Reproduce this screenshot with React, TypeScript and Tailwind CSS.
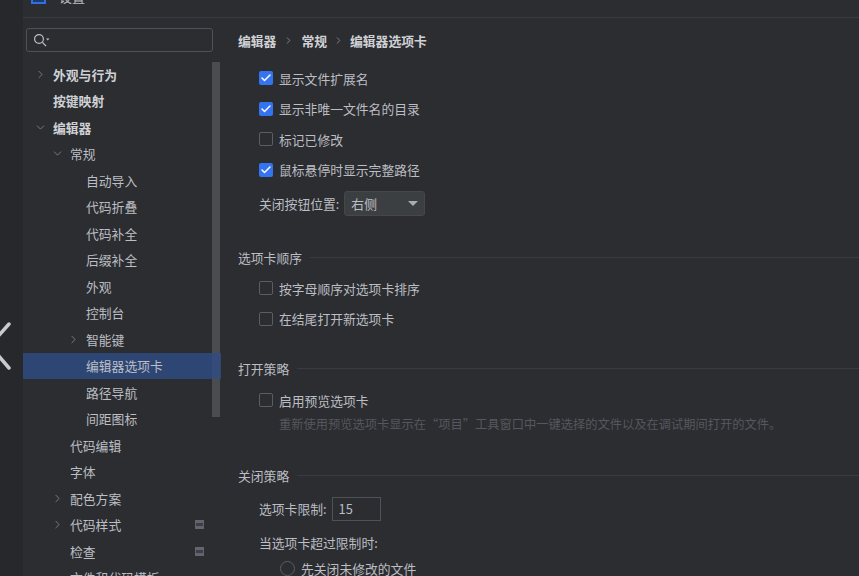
import { Check, ChevronDown, ChevronRight } from 'lucide-react'

const font = "[font-family:'Noto_Sans_CJK_SC','Liberation_Sans',sans-serif]"

const tree: { label: string; indent: number; arrow?: 'right' | 'down'; bold?: boolean; selected?: boolean; badge?: boolean }[] = [
  { label: '外观与行为', indent: 53, arrow: 'right', bold: true },
  { label: '按键映射', indent: 53, bold: true },
  { label: '编辑器', indent: 53, arrow: 'down', bold: true },
  { label: '常规', indent: 70, arrow: 'down' },
  { label: '自动导入', indent: 86 },
  { label: '代码折叠', indent: 86 },
  { label: '代码补全', indent: 86 },
  { label: '后缀补全', indent: 86 },
  { label: '外观', indent: 86 },
  { label: '控制台', indent: 86 },
  { label: '智能键', indent: 86, arrow: 'right' },
  { label: '编辑器选项卡', indent: 86, selected: true },
  { label: '路径导航', indent: 86 },
  { label: '间距图标', indent: 86 },
  { label: '代码编辑', indent: 70 },
  { label: '字体', indent: 70 },
  { label: '配色方案', indent: 70, arrow: 'right' },
  { label: '代码样式', indent: 70, arrow: 'right', badge: true },
  { label: '检查', indent: 70, badge: true },
  { label: '文件和代码模板', indent: 70 },
]

function TreeRow({ item }: { item: (typeof tree)[number] }) {
  return (
    <div
      className={`relative h-[26.5px] shrink-0 flex items-center text-[12.8px] ${item.selected ? 'bg-[#2f4c86]/80' : ''} ${item.bold ? 'font-bold text-[#cfd1d6]' : 'text-[#bcbec4]'}`}
      style={{ paddingLeft: item.indent - 23 }}
    >
      {item.arrow === 'right' && (
        <ChevronRight className="absolute w-[13px] h-[13px] text-[#9da0a8]" style={{ left: item.indent - 42 }} strokeWidth={1.2} />
      )}
      {item.arrow === 'down' && (
        <ChevronDown className="absolute w-[13px] h-[13px] text-[#9da0a8]" style={{ left: item.indent - 42 }} strokeWidth={1.2} />
      )}
      <span>{item.label}</span>
      {item.badge && (
        <span className="absolute left-[172px] w-[9px] h-[9px] bg-[#62656d] flex items-center justify-center">
          <span className="w-[7px] h-[3px] bg-[#3c3f45]" />
        </span>
      )}
    </div>
  )
}

function Checkbox({ label, checked }: { label: string; checked?: boolean }) {
  return (
    <div className="h-[30.5px] flex items-center gap-[6px] text-[12.8px] text-[#bcbec4]">
      <span className={`w-[14px] h-[14px] rounded-[2px] flex items-center justify-center ${checked ? 'bg-[#3574f0]' : 'border border-[#5a5d63]'}`}>
        {checked && <Check className="w-[12px] h-[12px] text-white" strokeWidth={3} />}
      </span>
      <span>{label}</span>
    </div>
  )
}

function Section({ title }: { title: string }) {
  return (
    <div className="flex items-center gap-[8px] text-[12.8px] text-[#bcbec4]">
      <span>{title}</span>
      <span className="flex-1 h-px bg-[#393b40]" />
    </div>
  )
}

export default function App() {
  return (
    <div className={`relative w-[859px] h-[576px] overflow-hidden bg-[#2b2d30] flex ${font}`}>
      <div className="w-[23px] shrink-0 bg-[#27282b]" />

      <div className="flex-1 min-w-0 flex flex-col">
        {/* title bar, cut off by the top of the picture */}
        <div className="h-[18px] shrink-0 flex items-end border-b border-[#393b40] pl-[8px] pb-[14px]">
          <span className="w-[15px] h-[15px] -mb-[1px] border-2 border-[#2f6fe0] bg-[#1d3a6e] shrink-0" />
          <span className="ml-[13px] text-[13px] leading-[13px] text-[#bcbec4]">设置</span>
        </div>

        <div className="flex-1 flex min-h-0">
          {/* left tree */}
          <div className="relative w-[198px] shrink-0">
            <div className="absolute left-[189px] top-[44px] w-[8px] h-[355px] bg-[#4a4c50]" />
            <div className="mx-[3px] mt-[10px] h-[24px] w-[187px] border border-[#4e5157] rounded-[3px] flex items-center pl-[6px] text-[#bcbec4]">
              <svg width="17" height="14" viewBox="0 0 17 14" fill="none" stroke="currentColor" strokeWidth="1.2">
                <circle cx="6" cy="6" r="4.4" />
                <path d="M9.4 9.4 L13 13" />
                <path d="M13 5.5 h3.5 l-1.75 2 z" fill="currentColor" stroke="none" />
              </svg>
            </div>
            <div className="relative mt-[9px] flex flex-col overflow-hidden h-[526px]">
              {tree.map((item) => (
                <TreeRow key={item.label} item={item} />
              ))}
            </div>
          </div>

          {/* settings page */}
          <div className="flex-1 min-w-0 pl-[17px] flex flex-col">
            <div className="mt-[13px] h-[20px] flex items-center text-[12.8px] font-bold text-[#cfd1d6]">
              <span>编辑器</span>
              <ChevronRight className="w-[11px] h-[11px] mx-[7px] text-[#9da0a8]" strokeWidth={1.5} />
              <span>常规</span>
              <ChevronRight className="w-[11px] h-[11px] mx-[6px] text-[#9da0a8]" strokeWidth={1.5} />
              <span>编辑器选项卡</span>
            </div>

            <div className="pl-[21px] mt-[13px]">
              <Checkbox label="显示文件扩展名" checked />
              <Checkbox label="显示非唯一文件名的目录" checked />
              <Checkbox label="标记已修改" />
              <Checkbox label="鼠标悬停时显示完整路径" checked />
              <div className="mt-[6px] flex items-center gap-[5px] text-[12.8px] text-[#bcbec4]">
                <span>关闭按钮位置:</span>
                <span className="w-[81px] h-[25px] bg-[#3c3f41] border border-[#45474b] rounded-[3px] flex items-center justify-between pl-[6px] pr-[6px]">
                  <span>右侧</span>
                  <span className="w-0 h-0 border-x-[5px] border-x-transparent border-t-[5px] border-t-[#a9acb3]" />
                </span>
              </div>
            </div>

            <div className="mt-[32px]">
              <Section title="选项卡顺序" />
            </div>
            <div className="pl-[21px] mt-[5.5px]">
              <Checkbox label="按字母顺序对选项卡排序" />
              <Checkbox label="在结尾打开新选项卡" />
            </div>

            <div className="mt-[25.5px]">
              <Section title="打开策略" />
            </div>
            <div className="pl-[21px] mt-[6.5px]">
              <Checkbox label="启用预览选项卡" />
              <div className="pl-[20px] text-[12.25px] leading-[16px] text-[#55585e] whitespace-nowrap">
                重新使用预览选项卡显示在“项目”工具窗口中一键选择的文件以及在调试期间打开的文件。
              </div>
            </div>

            <div className="mt-[34px]">
              <Section title="关闭策略" />
            </div>
            <div className="pl-[21px] mt-[12px] text-[12.8px] text-[#bcbec4]">
              <div className="flex items-center gap-[5px]">
                <span>选项卡限制:</span>
                <span className="w-[49px] h-[24px] border border-[#4e5157] flex items-center pl-[6px]">15</span>
              </div>
              <div className="mt-[12px]">当选项卡超过限制时:</div>
              <div className="mt-[7px] pl-[21px] flex items-center gap-[6px] whitespace-nowrap">
                <span className="w-[15px] h-[15px] rounded-full border border-[#5a5d63]" />
                <span>先关闭未修改的文件</span>
              </div>
            </div>
          </div>
        </div>
      </div>

      {/* big back chevron lying over the left edge */}
      <svg className="absolute left-0 top-[318px]" width="12" height="56" viewBox="0 0 12 56" fill="none" stroke="#c9cacc" strokeWidth="3.5" strokeLinecap="round">
        <path d="M9 6 L-8 25" />
        <path d="M9 50 L-3 36" />
      </svg>
    </div>
  )
}
